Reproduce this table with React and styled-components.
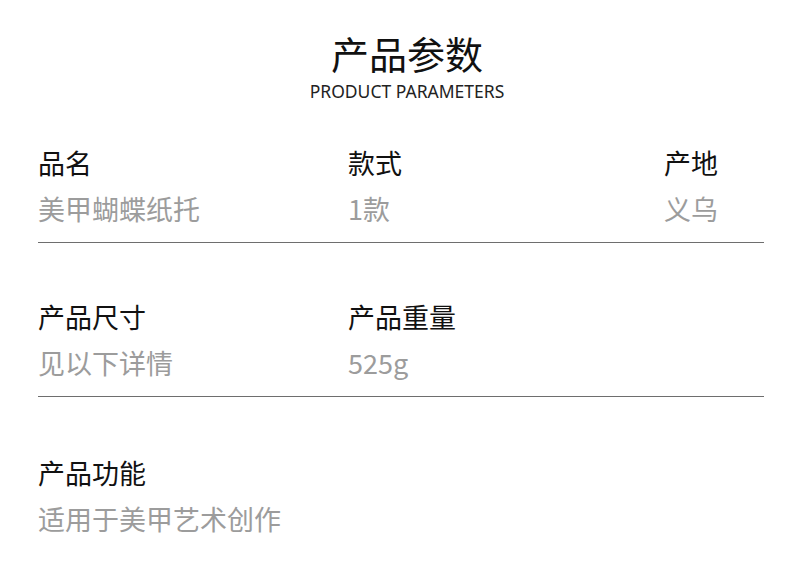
import React from 'react';
import styled, { createGlobalStyle } from 'styled-components';

const GlobalStyle = createGlobalStyle`
  body {
    margin: 0;
    background: #fff;
    font-family: "Noto Sans CJK SC", "Noto Sans", sans-serif;
  }
`;

const Page = styled.div`
  width: 800px;
  height: 586px;
  padding: 31px 36px 0 38px;
  box-sizing: border-box;
`;

const Header = styled.header`
  display: flex;
  flex-direction: column;
  align-items: center;
  gap: 6px;
  padding-left: 12px;
  margin-bottom: 44px;
`;

const Title = styled.h1`
  margin: 0;
  font-size: 38px;
  line-height: 44px;
  font-weight: 400;
  color: #111;
`;

const Subtitle = styled.div`
  font-family: "Noto Sans", "Open Sans", sans-serif;
  font-size: 17.5px;
  line-height: 20px;
  color: #222;
`;

const Row = styled.section`
  display: grid;
  grid-template-columns: 310px 316px 1fr;
  padding-top: ${(p) => (p.first ? '0' : p.last ? '58px' : '56px')};
  padding-bottom: 15px;
  border-bottom: ${(p) => (p.last ? 'none' : '1px solid #6e6e6e')};
`;

const Field = styled.div`
  display: flex;
  flex-direction: column;
  gap: 10px;
`;

const Label = styled.div`
  font-size: 27px;
  line-height: 36px;
  color: #111;
`;

const Value = styled.div`
  font-size: 27px;
  line-height: 36px;
  color: #9c9c9c;
`;

const rows = [
  [
    ['品名', '美甲蝴蝶纸托'],
    ['款式', '1款'],
    ['产地', '义乌'],
  ],
  [
    ['产品尺寸', '见以下详情'],
    ['产品重量', '525g'],
  ],
  [['产品功能', '适用于美甲艺术创作']],
];

export default function App() {
  return (
    <Page>
      <GlobalStyle />
      <Header>
        <Title>产品参数</Title>
        <Subtitle>PRODUCT PARAMETERS</Subtitle>
      </Header>
      {rows.map((fields, i) => (
        <Row key={i} first={i === 0} last={i === rows.length - 1}>
          {fields.map(([label, value]) => (
            <Field key={label}>
              <Label>{label}</Label>
              <Value>{value}</Value>
            </Field>
          ))}
        </Row>
      ))}
    </Page>
  );
}
